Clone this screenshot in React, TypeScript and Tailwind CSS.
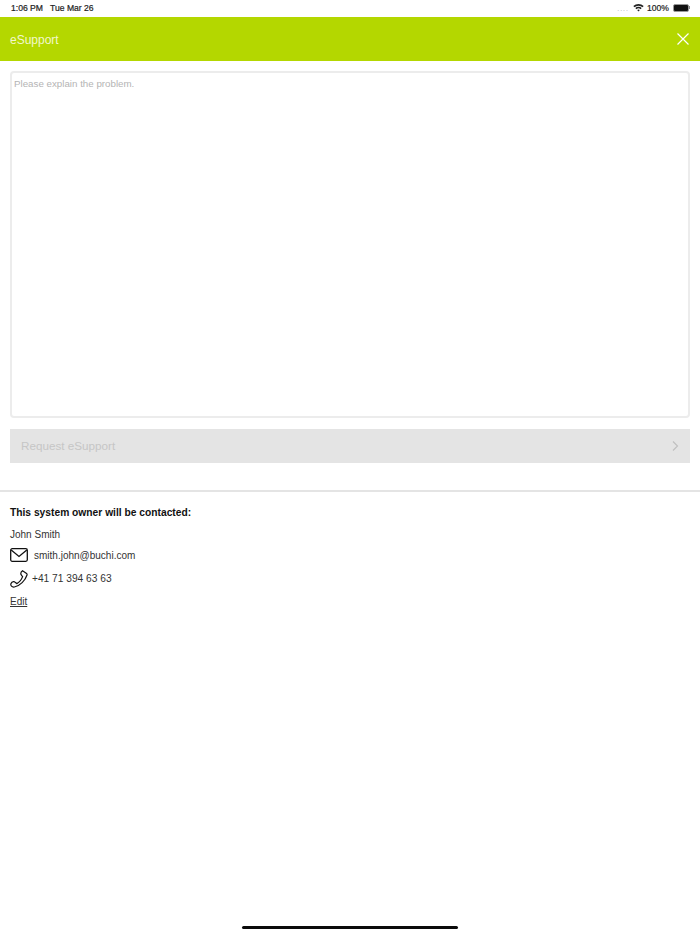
import React from "react";

export default function App() {
  return (
    <div className="relative w-[700px] h-[934px] bg-white overflow-hidden font-['Liberation_Sans',Arial,sans-serif] text-[#222]">
      <div className="h-[17px] flex items-center justify-between pl-[11px] pr-[10px] text-[8.6px] text-[#222] [-webkit-text-stroke:0.2px_#222]">
        <div className="flex gap-[7px] mt-[-1px]">
          <span>1:06 PM</span>
          <span>Tue Mar 26</span>
        </div>
        <div className="flex items-center gap-[3px] mt-[-1px]">
          <span className="text-[#aaa] tracking-[1px] text-[7px] mt-[2px] mr-[1px] [-webkit-text-stroke:0px]">....</span>
          <svg width="11" height="9" viewBox="0 0 11 9">
            <path d="M0.3 3 A7.5 7.5 0 0 1 10.7 3 L9.5 4.3 A5.8 5.8 0 0 0 1.5 4.3 Z" fill="#222" />
            <path d="M2.3 5.1 A4.6 4.6 0 0 1 8.7 5.1 L7.6 6.2 A3.1 3.1 0 0 0 3.4 6.2 Z" fill="#222" />
            <path d="M4.2 7 A1.9 1.9 0 0 1 6.8 7 L5.5 8.5 Z" fill="#222" />
          </svg>
          <span>100%</span>
          <div className="flex items-center ml-[1px]">
            <div className="w-[16px] h-[8px] rounded-[2px] border border-[#999] bg-[#111]" />
            <div className="w-[1px] h-[3px] bg-[#888]" />
          </div>
        </div>
      </div>

      <div className="h-[44px] bg-[#b4d700] flex items-center justify-between pl-[10px] pr-[11px] text-white">
        <span className="text-[12px] text-[#f2f8cc] mt-[1px]">eSupport</span>
        <svg width="12" height="12" viewBox="0 0 12 12" fill="none" stroke="white" strokeWidth="1.2">
          <path d="M0.5 0.5 L11.5 11.5 M11.5 0.5 L0.5 11.5" />
        </svg>
      </div>

      <div className="px-[10px] pt-[10px]">
        <div className="h-[347px] border-2 border-[#ececec] rounded-[4px] px-[2px] py-[3px] text-[9.75px] leading-[15px] text-[#b4b4b4]">
          Please explain the problem.
        </div>
        <div className="mt-[11px] h-[34px] bg-[#e4e4e4] flex items-center justify-between pl-[11px] pr-[11px] text-[#c6c6c6]">
          <span className="text-[11.7px]">Request eSupport</span>
          <svg width="7" height="10" viewBox="0 0 7 10" fill="none" stroke="#c0c0c0" strokeWidth="1.2">
            <path d="M1 0.5 L5.5 5 L1 9.5" />
          </svg>
        </div>
      </div>

      <div className="mt-[27px] h-[2px] bg-[#e4e4e4]" />

      <div className="px-[10px] pt-[13px] text-[10px] text-[#333]">
        <div className="font-bold text-[10.25px] text-[#111] leading-[16px]">This system owner will be contacted:</div>
        <div className="mt-[6px] leading-[16px]">John Smith</div>
        <div className="mt-[3px] flex items-center h-[18px]">
          <svg width="18" height="14" viewBox="0 0 18 14" fill="none" stroke="#111" strokeWidth="1.3">
            <rect x="0.7" y="0.7" width="16.6" height="12.6" rx="1.5" />
            <path d="M1.2 2 L9 8.5 L16.8 2" />
          </svg>
          <span className="ml-[6px]">smith.john@buchi.com</span>
        </div>
        <div className="mt-[5px] flex items-center h-[20px]">
          <svg width="18" height="18" viewBox="0 0 18 18" fill="none" stroke="#111" strokeWidth="1.2">
            <path d="M12.5 0.8 L16.6 3.4 C17.1 3.8 17.2 4.3 17 5 C15.3 10.5 10 16 4.4 17 C1.8 17.4 0.4 15.5 0.9 13.8 C1.3 12.6 2.8 11.4 4 11.6 C5 11.8 6 13.2 6.8 13.6 C9 12.5 11.5 9.5 12.6 6.6 C12.2 6 11 5 10.8 4.2 C10.7 3.2 11.6 1.4 12.5 0.8 Z" />
          </svg>
          <span className="ml-[4px] text-[10.2px]">+41 71 394 63 63</span>
        </div>
        <div className="mt-[6px] underline leading-[14px]">Edit</div>
      </div>

      <div className="absolute left-[242px] bottom-[5px] w-[216px] h-[3px] rounded-full bg-[#0a0a0a]" />
    </div>
  );
}
